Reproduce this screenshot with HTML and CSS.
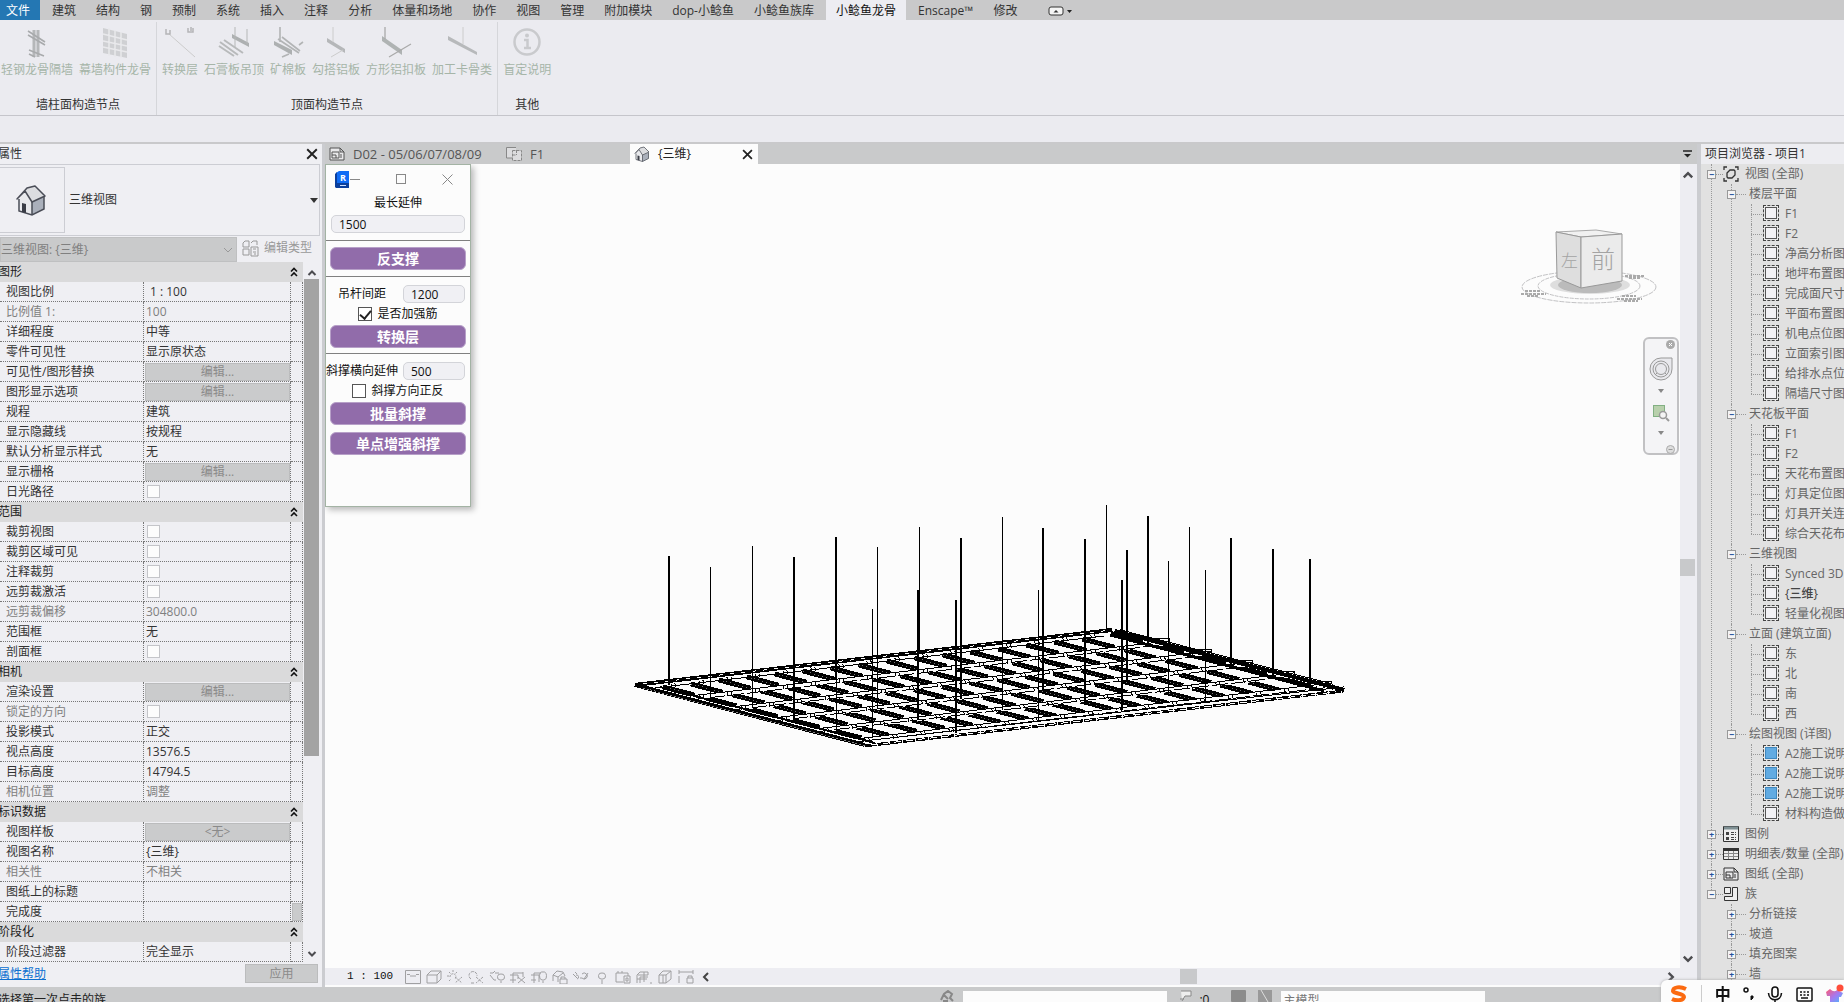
FILE: index.html
```html
<!DOCTYPE html>
<html lang="zh-CN">
<head>
<meta charset="utf-8">
<title>项目1 - {三维}</title>
<link rel="stylesheet" href="styles.css">
</head>
<body>
<svg width="0" height="0" class="defs" aria-hidden="true">
  <symbol id="collapse" viewBox="0 0 8 10"><path d="M1 4.5 4 1.5 7 4.5M1 9 4 6 7 9" fill="none" stroke="#111" stroke-width="1.6"/></symbol>
  <symbol id="chev" viewBox="0 0 10 10"><path d="M1 3 5 7 9 3" fill="none" stroke="currentColor" stroke-width="1"/></symbol>
  <symbol id="bold-chev" viewBox="0 0 10 10"><path d="M1.500 3 5 6.500 8.500 3" fill="none" stroke="#4c4c50" stroke-width="2"/></symbol>
  <symbol id="close" viewBox="0 0 10 10"><path d="M1 1 9 9M9 1 1 9" stroke="#222" stroke-width="1.600"/></symbol>
  <symbol id="house" viewBox="0 0 32 32"><path d="M4 16 7 28 17 31 29 25 29 13 17 2 12 4Z" fill="#e8e9ec"/><path d="M17 16 29 13V25L17 31Z" fill="#aab0bb"/><path d="M2 15 12 4 20 2 30 12 17 18 10 7Z" fill="#dcdde0" stroke="#4a4d57" stroke-width="1.500" stroke-linejoin="round"/><path d="M4 15V27L17 31 29 25V13M17 18V31" fill="none" stroke="#4a4d57" stroke-width="1.500"/><path d="M7 19 11 20V29L7 28Z" fill="#3b3e47"/></symbol>
  <symbol id="sheet" viewBox="0 0 16 14"><path d="M1 1H11L15 5V13H1Z M11 1V5H15" fill="#e8e8ea" stroke="currentColor"/><path d="M3 5H10V11H3ZM3 8H7V11M12 7V11" fill="none" stroke="currentColor"/></symbol>
</svg>

<header class="ribbon">
  <nav class="tabs">
    <button class="tab file">文件</button><button class="tab">建筑</button><button class="tab">结构</button><button class="tab">钢</button><button class="tab">预制</button><button class="tab">系统</button><button class="tab">插入</button><button class="tab">注释</button><button class="tab">分析</button><button class="tab">体量和场地</button><button class="tab">协作</button><button class="tab">视图</button><button class="tab">管理</button><button class="tab">附加模块</button><button class="tab">dop-小鲶鱼</button><button class="tab">小鲶鱼族库</button><button class="tab active">小鲶鱼龙骨</button><button class="tab">Enscape™</button><button class="tab">修改</button>
    <button class="tab toggle" aria-label="最小化功能区"><svg width="26" height="10" viewBox="0 0 26 10"><rect x="1" y="1" width="14" height="8" rx="2" fill="#f4f4f4" stroke="#333"/><path d="M5.500 6.500H10.500L8 4Z" fill="#333"/><path d="M19 4H24L21.500 7Z" fill="#222"/></svg></button>
  </nav>
  <div class="panels">
    <section class="panel wall">
      <div class="tools">
        <button class="tool"><svg viewBox="0 0 32 32"><path d="M13 3V30M17 3V30" stroke="#b5b7b9" stroke-width="3"/><path d="M7 4 24 15M7 8 24 18M8 23 23 29M8 27 14 30" stroke="#a8aaac" stroke-width="1.600"/></svg>轻钢龙骨隔墙</button>
        <button class="tool"><svg viewBox="0 0 32 32"><path d="M4 1 28 7V31L4 26Z" fill="#cfd0d3"/><path d="M10 1V29M16 3V30M22 5V31M4 7 28 13M4 14 28 19M4 20 28 25" stroke="#e9e9ec" stroke-width="1.500"/></svg>幕墙构件龙骨</button>
      </div>
      <h2>墙柱面构造节点</h2>
    </section>
    <section class="panel ceiling">
      <div class="tools">
        <button class="tool"><svg viewBox="0 0 32 32"><path d="M5 7 31 30" stroke="#ccc"/><path d="M2 2V7H6V3M24 1V5H29V1M27 0V4" fill="none" stroke="#b5b5b7" stroke-width="1.500"/></svg>转换层</button>
        <button class="tool"><svg viewBox="0 0 32 32"><path d="M14 7 31 16V20L14 11Z" fill="#adb0b1"/><path d="M17 0V20M29 2V17" stroke="#b5b7b7"/><path d="M2 15 20 28M6 13 25 26M1 19 16 29" stroke="#b8babb" stroke-width="2"/></svg>石膏板吊顶</button>
        <button class="tool"><svg viewBox="0 0 32 32"><path d="M2 14 20 23V28L2 18Z" fill="#adb0b1"/><path d="M8 0V15M10 10 28 24M6 12 27 26M17 27 10 30M27 18 31 15" stroke="#b2b4b5" stroke-width="1.600"/></svg>矿棉板</button>
        <button class="tool"><svg viewBox="0 0 32 32"><path d="M7 11 25 22V26L7 15Z" fill="#b5b7b9"/><path d="M13 0V15M23 23 11 30" stroke="#ccc"/></svg>勾搭铝板</button>
        <button class="tool"><svg viewBox="0 0 32 32"><path d="M2 9 22 23V28L2 14Z" fill="#afb3b3"/><path d="M5 0V12M31 17 9 30" stroke="#aaa" stroke-width="1.300"/></svg>方形铝扣板</button>
        <button class="tool"><svg viewBox="0 0 32 32"><path d="M2 9 31 25V28L2 13Z" fill="#b7b9bb"/><path d="M17 0V17" stroke="#ccc"/></svg>加工卡骨类</button>
      </div>
      <h2>顶面构造节点</h2>
    </section>
    <section class="panel other">
      <div class="tools">
        <button class="tool"><svg viewBox="0 0 32 32"><circle cx="16" cy="15" r="12.500" fill="none" stroke="#c9cacd" stroke-width="2.500"/><path d="M13 13H16.500V21M13 21H20" fill="none" stroke="#c9cacd" stroke-width="2.500"/><circle cx="16" cy="8.500" r="2" fill="#c9cacd"/></svg>盲定说明</button>
      </div>
      <h2>其他</h2>
    </section>
  </div>
  <div class="options"></div>
</header>

<div class="workspace">
  <aside class="props">
    <div class="pane-title"><span>属性</span><button class="icon-btn" aria-label="关闭属性"><svg width="12" height="12"><use href="#close"/></svg></button></div>
    <div class="type">
      <div class="thumb"><svg width="32" height="32"><use href="#house"/></svg></div>
      <span>三维视图</span>
      <button class="icon-btn" aria-label="类型选择"><svg width="8" height="5" viewBox="0 0 8 5"><path d="M0 0H8L4 5Z" fill="#333"/></svg></button>
    </div>
    <div class="filter">
      <div class="combo"><select disabled aria-label="实例过滤器"><option>三维视图: {三维}</option></select><svg width="10" height="10"><use href="#chev"/></svg></div>
      <button class="edit-type" disabled><svg width="17" height="17" viewBox="0 0 17 17" fill="none" stroke="#999"><path d="M1 3 3 1H7V7H1ZM9 3 11 1H15V5M1 9H7V15H1ZM9 7H16V16H9ZM11 9H14M11 12H14M12 14H14"/></svg>编辑类型</button>
    </div>
    <div class="grid-wrap">
      <table class="grid">
        <colgroup><col class="c1"><col class="c2"><col class="c3"></colgroup>
        <tbody>
        <tr class="cat"><th colspan="2">图形</th><td><svg width="8" height="10"><use href="#collapse"/></svg></td></tr>
        <tr><th>视图比例</th><td class="inset">1 : 100</td><td></td></tr>
        <tr class="dim"><th>比例值 1:</th><td>100</td><td></td></tr>
        <tr><th>详细程度</th><td>中等</td><td></td></tr>
        <tr><th>零件可见性</th><td>显示原状态</td><td></td></tr>
        <tr><th>可见性/图形替换</th><td><button disabled>编辑...</button></td><td></td></tr>
        <tr><th>图形显示选项</th><td><button disabled>编辑...</button></td><td></td></tr>
        <tr><th>规程</th><td>建筑</td><td></td></tr>
        <tr><th>显示隐藏线</th><td>按规程</td><td></td></tr>
        <tr><th>默认分析显示样式</th><td>无</td><td></td></tr>
        <tr><th>显示栅格</th><td><button disabled>编辑...</button></td><td></td></tr>
        <tr><th>日光路径</th><td><input type="checkbox" aria-label="日光路径"></td><td></td></tr>
        <tr class="cat"><th colspan="2">范围</th><td><svg width="8" height="10"><use href="#collapse"/></svg></td></tr>
        <tr><th>裁剪视图</th><td><input type="checkbox" aria-label="裁剪视图"></td><td></td></tr>
        <tr><th>裁剪区域可见</th><td><input type="checkbox" aria-label="裁剪区域可见"></td><td></td></tr>
        <tr><th>注释裁剪</th><td><input type="checkbox" aria-label="注释裁剪"></td><td></td></tr>
        <tr><th>远剪裁激活</th><td><input type="checkbox" aria-label="远剪裁激活"></td><td></td></tr>
        <tr class="dim"><th>远剪裁偏移</th><td>304800.0</td><td></td></tr>
        <tr><th>范围框</th><td>无</td><td></td></tr>
        <tr><th>剖面框</th><td><input type="checkbox" aria-label="剖面框"></td><td></td></tr>
        <tr class="cat"><th colspan="2">相机</th><td><svg width="8" height="10"><use href="#collapse"/></svg></td></tr>
        <tr><th>渲染设置</th><td><button disabled>编辑...</button></td><td></td></tr>
        <tr class="dim"><th>锁定的方向</th><td><input type="checkbox" aria-label="锁定的方向"></td><td></td></tr>
        <tr><th>投影模式</th><td>正交</td><td></td></tr>
        <tr><th>视点高度</th><td>13576.5</td><td></td></tr>
        <tr><th>目标高度</th><td>14794.5</td><td></td></tr>
        <tr class="dim"><th>相机位置</th><td>调整</td><td></td></tr>
        <tr class="cat"><th colspan="2">标识数据</th><td><svg width="8" height="10"><use href="#collapse"/></svg></td></tr>
        <tr><th>视图样板</th><td><button disabled>&lt;无&gt;</button></td><td></td></tr>
        <tr><th>视图名称</th><td>{三维}</td><td></td></tr>
        <tr class="dim"><th>相关性</th><td>不相关</td><td></td></tr>
        <tr><th>图纸上的标题</th><td></td><td></td></tr>
        <tr><th>完成度</th><td></td><td><button aria-label="关联参数"></button></td></tr>
        <tr class="cat"><th colspan="2">阶段化</th><td><svg width="8" height="10"><use href="#collapse"/></svg></td></tr>
        <tr><th>阶段过滤器</th><td>完全显示</td><td></td></tr>
        </tbody>
      </table>
      <div class="scroll"><svg class="up" width="10" height="10"><use href="#bold-chev"/></svg><span class="bar"></span><svg width="10" height="10"><use href="#bold-chev"/></svg></div>
    </div>
    <div class="foot"><a href="#help">属性帮助</a><button disabled>应用</button></div>
  </aside>

  <main class="stage">
    <div class="doc-tabs">
      <button class="doc first"><svg width="16" height="14"><use href="#sheet"/></svg>D02 - 05/06/07/08/09</button>
      <button class="doc second"><svg width="16" height="14" viewBox="0 0 16 14"><path d="M.5.5H10V3H15.500V13.500H6V11H.500Z" fill="#dcdcde"/><path d="M6 11H.5V.5H10" fill="none" stroke="#888"/><path d="M6.500 3.500H15.500V13.500H6.500ZM6.500 8H10M10.500 3V8" fill="none" stroke="#888" stroke-dasharray="3 1"/></svg>F1</button>
      <div class="doc active"><svg width="16" height="16"><use href="#house"/></svg>{三维}<button class="icon-btn" aria-label="关闭视图"><svg width="11" height="11"><use href="#close"/></svg></button></div>
      <button class="icon-btn more" aria-label="视图列表"><svg width="9" height="8" viewBox="0 0 9 8"><path d="M0 1H9" stroke="#222" stroke-width="1.500"/><path d="M1 4H8L4.500 7.500Z" fill="#222"/></svg></button>
    </div>
    <div class="view-row">
      <div class="canvas">
        <svg class="model" viewBox="0 0 1356 804" shape-rendering="crispEdges" fill="none" stroke="#000">
          <!-- cross ribs, broken where the carrying rails pass over them -->
          <path stroke-width="5" stroke-dasharray="33 10" d="M338 523l202 52M366 520l204 53M394 516l204 53M422 513l204 53M450 510l204 53M478 507l204 53M506 504l204 53M534 501l204 53M562 497l204 53M590 494l204 53M618 491l204 53M646 488l204 53M674 485l204 53M702 481l204 53M730 478l204 53M758 475l204 53M786 470l206 54"/>
          <path stroke="#777" stroke-width="1" stroke-dasharray="1 3" d="M338 523l196 51M366 520l196 51M394 516l196 51M422 513l196 51M450 510l196 51M478 507l196 51M506 504l196 51M534 501l196 51M562 497l196 51M590 494l196 51M618 491l196 51M646 488l196 51M674 485l196 51M702 481l196 51M730 478l196 51M758 475l196 51"/>
          <!-- carrying rails -->
          <g stroke="#fcfcfc" stroke-width="4"><path d="M366 534L845 479M408 545L887 489M449 556L928 500M491 567L970 511M532 577L1008 522"/></g>
          <g stroke-width="1"><path d="M366 532L845 477M408 543L887 487M449 554L928 498M491 565L970 509M532 575L1008 519"/><path d="M366 536L845 480M408 546L887 491M449 557L928 502M491 568L970 512M532 578L1008 523" stroke-dasharray="16 3"/></g>
          <g stroke-width="4" stroke-dasharray="1 3 1 23.200"><path d="M374 533L845 479M416 544L887 489M457 555L928 500M499 566L970 511M540 576L1008 522M346 522L788 470"/></g>
          <!-- perimeter channel -->
          <path stroke-width="4" d="M310 521L788 466"/>
          <path stroke="#fcfcfc" stroke-width="1" stroke-dasharray="4 7" d="M318 520L788 466"/>
          <path stroke-width="1" d="M322 525L780 472"/>
          <path stroke-width="4" d="M310 521L540 581"/>
          <path stroke="#888" stroke-width="1" stroke-dasharray="2 2" d="M318 524L540 582"/>
          <path stroke-width="2" d="M335 523L550 579"/>
          <path stroke-width="4" d="M790 467L1020 526"/>
          <path stroke-width="3" d="M786 471L1000 527"/>
          <path stroke-width="1" d="M796 466L1008 520V526M830 474.500H845V483M872 485.500H887V494M914 496.500H928V505M956 507.500H970V516M994 517.500H1008"/>
          <path stroke-width="1" d="M540 577L1020 523"/>
          <path stroke-width="3" stroke-dasharray="12 1" d="M540 582L1020 527"/>
          <path stroke="#fcfcfc" stroke-width="1" stroke-dasharray="7 5" d="M546 581L1012 528"/>
          <!-- hangers -->
          <path stroke-width="2" d="M344 392V521M469 393V556M511 373V516M593 426V556M631 436V569M636 374V535M678 353V546M719 364V526M761 375V539M798 416V546M803 386V516M824 352V481M907 374V503M949 385V515M986 395V525"/>
          <path stroke-width="1" d="M385.500 403V534M427.500 382V544M511.500 516V568M552.500 383V544M547.500 445V574M594.500 363V489M714.500 426V556M782.500 341V469M844.500 397V528M865.500 363V493M881.500 406V539"/>
        </svg>
        <svg class="cube" width="138" height="76" viewBox="0 0 138 76" aria-label="ViewCube">
          <g fill="none" stroke="#c2c2c4" stroke-width="1"><ellipse cx="69" cy="58" rx="67" ry="16" stroke-dasharray="5 1"/><ellipse cx="69" cy="57" rx="51" ry="13" stroke-dasharray="4 1"/></g>
          <path d="M1 65H26M5 62H20M7 67H18M97 70H122M102 67H116M104 72H118M105 47H124M109 49H120" stroke="#aaa" stroke-width="2" stroke-dasharray="3 1"/>
          <ellipse cx="70" cy="56" rx="40" ry="9" fill="#dedede"/><ellipse cx="70" cy="56" rx="32" ry="8" fill="#bbb"/>
          <path d="M36 3 76 1 102 5 61 8Z" fill="#f1f1f1" stroke="#aaa"/>
          <path d="M36 3 61 8V59L37 49Z" fill="#dedede" stroke="#999"/>
          <path d="M61 8 102 5V52L61 59Z" fill="#ebebeb" stroke="#999"/>
          <text x="41" y="38" class="cube-left">左</text><text x="71" y="39" class="cube-front">前</text>
        </svg>
        <div class="navbar">
          <svg width="9" height="9" viewBox="0 0 9 9" class="nav-end"><circle cx="4.500" cy="4.500" r="4.500" fill="#aaa"/><path d="M3 3 6 6M6 3 3 6" stroke="#fff"/></svg>
          <button class="icon-btn" aria-label="导航控制盘"><svg width="24" height="24" viewBox="0 0 24 24" fill="#e9e9ed" stroke="#999"><path d="M12 1H23V12A11 11 0 1 1 12 1Z"/><circle cx="12" cy="12" r="8"/><circle cx="12" cy="12" r="5.500"/><path d="M6 18 8 16M18 18 16 16"/></svg></button>
          <svg width="6" height="4" viewBox="0 0 6 4"><path d="M0 0H6L3 4Z" fill="#888"/></svg>
          <hr>
          <button class="icon-btn" aria-label="缩放"><svg width="18" height="18" viewBox="0 0 18 18"><rect x="1.500" y="1.500" width="11" height="11" fill="#b8d0ac" stroke="#82b083"/><circle cx="11" cy="11" r="3.500" fill="#f4f4f4" stroke="#999" stroke-width="1.500"/><path d="M14 14 17 17" stroke="#999" stroke-width="2"/></svg></button>
          <svg width="6" height="4" viewBox="0 0 6 4"><path d="M0 0H6L3 4Z" fill="#888"/></svg>
          <svg width="9" height="9" viewBox="0 0 9 9" class="nav-end low"><circle cx="4.500" cy="4.500" r="4" fill="#ddd" stroke="#aaa"/><path d="M2.500 4.500H6.500" stroke="#999"/></svg>
        </div>
        <form class="dialog">
          <div class="bar">
            <svg width="15" height="17" viewBox="0 0 15 17"><path d="M1 2 4 0H14V12H1Z" fill="#0f6cf5"/><path d="M0 3 2 1V12H14V17H1L0 16Z" fill="#0b3f9c"/><path d="M2 2H14V12H2Z" fill="#0f6cf5"/><text x="5" y="10" class="logo-r">R</text><path d="M5 14.500H11" stroke="#cfe0ff"/></svg>
            <button type="button" class="icon-btn" aria-label="最小化"><svg width="11" height="11"><path d="M0 5.500H10" stroke="#888"/></svg></button>
            <button type="button" class="icon-btn max" aria-label="最大化"><svg width="11" height="11"><rect x=".5" y=".5" width="9" height="9" fill="none" stroke="#888"/></svg></button>
            <button type="button" class="icon-btn x" aria-label="关闭"><svg width="11" height="11"><path d="M.5.5 10.500 10.500M10.500.5.5 10.500" stroke="#888"/></svg></button>
          </div>
          <label class="top" for="ext">最长延伸</label>
          <input class="field wide" id="ext" type="text" value="1500">
          <hr><button type="button" class="go">反支撑</button><hr>
          <div class="pair"><label for="gap">吊杆间距</label><input class="field" id="gap" type="text" value="1200"></div>
          <label class="check"><input type="checkbox" checked>是否加强筋</label>
          <button type="button" class="go tight">转换层</button><hr>
          <div class="pair"><label for="dx">斜撑横向延伸</label><input class="field" id="dx" type="text" value="500"></div>
          <label class="check"><input type="checkbox">斜撑方向正反</label>
          <button type="button" class="go tight">批量斜撑</button>
          <button type="button" class="go">单点增强斜撑</button>
        </form>
      </div>
      <div class="vscroll"><svg class="up" width="12" height="12"><use href="#bold-chev"/></svg><span></span><svg width="12" height="12"><use href="#bold-chev"/></svg></div>
    </div>
    <div class="view-bar">
      <span class="scale">1 : 100</span>
      <div class="vicons">
        <svg viewBox="0 0 16 14"><path d="M.5.5H15.500V13.500H.5ZM2 4.500H5M5 6H11M11 4.500H14"/></svg>
        <svg viewBox="0 0 16 14"><path d="M1 5H11V13H1ZM1 5 5 1H15L11 5M15 1V9L11 13"/></svg>
        <svg viewBox="0 0 16 14"><path stroke-dasharray="2 1" d="M6 0V3M0 6H3M2 2 4 4M10 2 8 4M3 7A3 3 0 1 1 8 9M8 7 15 13M15 7 8 13M2 11 4 9"/></svg>
        <svg viewBox="0 0 16 14"><path stroke-dasharray="3 1" d="M3 9A4 4 0 1 1 9 6M3 13H7M8 7 15 13M15 7 8 13"/></svg>
        <svg viewBox="0 0 16 14"><path d="M1 3H4L6 1M1 5 5 10H7M6 3H10M12 13V11M12 4A3 3 0 0 0 11 10H13A3 3 0 0 0 12 4"/></svg>
        <svg viewBox="0 0 16 14"><path d="M3 13V3H13M0 5H8V9M0 10H6M8 7 15 13M15 7 8 13M13 2V7"/></svg>
        <svg viewBox="0 0 16 14"><path d="M3 13V3H10M0 5H8V12M0 10H5M12 13V11M12 2A3 4 0 0 0 11 10H13A3 4 0 0 0 12 2"/></svg>
        <svg viewBox="0 0 16 14"><path d="M1 11V5L5 1 11 2 13 6M1 5 6 7V12M6 7 11 3M8 9H15V14H8ZM9 9V7H13V9"/></svg>
        <svg viewBox="0 0 16 14"><path d="M0 4 4 8M3 5A2 2 0 1 1 4 9M7 8H9A3 3 0 1 0 9 4M11 9 15 3M2 2 4 4"/></svg>
        <svg viewBox="0 0 16 14"><path d="M8 3A3 3 0 0 0 7 9H9A3 3 0 0 0 8 3M7 11H9M7 13H9"/></svg>
        <svg viewBox="0 0 16 14"><path d="M1 3H13V6M1 3V12H8M3 1V3M7 1V3M9 6H15V13H9ZM11 8H13V11H11Z"/></svg>
        <svg viewBox="0 0 16 14"><path d="M1 13V5L4 2H12V5H2M4 13V7H12M8 2V12M1 9H11M14 13H16"/></svg>
        <svg viewBox="0 0 16 14"><path d="M2 5H9V13H2ZM2 5 6 1H14L9 5M14 1V9L9 13M6 5V13"/></svg>
        <svg viewBox="0 0 16 14"><path d="M1 0V4M15 0V4M1 2H15M1 6V13M9 8H15V13H9ZM10 8V6H14V8"/></svg>
        <svg viewBox="0 0 16 14" class="fold"><path d="M9 3 5 7 9 11"/></svg>
      </div>
      <span class="hthumb"></span>
      <svg class="right" width="12" height="12"><use href="#bold-chev"/></svg>
    </div>
  </main>

  <aside class="browser">
    <div class="pane-title">项目浏览器 - 项目1</div>
    <ul class="tree">
      <li><div class="row"><i class="box">−</i><i class="stub"></i><svg width="16" height="16" viewBox="0 0 16 16" fill="none" stroke="#333" stroke-width="1.300"><path d="M1 4V1H4M12 1H15V4M1 12V15H4M12 15H15V12M4 7 7 4H11L12 5V9L9 12H5L4 11Z"/></svg>视图 (全部)</div>
        <ul>
          <li><div class="row"><i class="box">−</i><i class="stub"></i>楼层平面</div>
            <ul class="leaves"><li><i></i>F1</li><li><i></i>F2</li><li><i></i>净高分析图</li><li><i></i>地坪布置图</li><li><i></i>完成面尺寸</li><li><i></i>平面布置图</li><li><i></i>机电点位图</li><li><i></i>立面索引图</li><li><i></i>给排水点位</li><li><i></i>隔墙尺寸图</li></ul></li>
          <li><div class="row"><i class="box">−</i><i class="stub"></i>天花板平面</div>
            <ul class="leaves"><li><i></i>F1</li><li><i></i>F2</li><li><i></i>天花布置图</li><li><i></i>灯具定位图</li><li><i></i>灯具开关连</li><li><i></i>综合天花布</li></ul></li>
          <li><div class="row"><i class="box">−</i><i class="stub"></i>三维视图</div>
            <ul class="leaves"><li><i></i>Synced 3D</li><li class="current"><i></i>{三维}</li><li><i></i>轻量化视图</li></ul></li>
          <li><div class="row"><i class="box">−</i><i class="stub"></i>立面 (建筑立面)</div>
            <ul class="leaves"><li><i></i>东</li><li><i></i>北</li><li><i></i>南</li><li><i></i>西</li></ul></li>
          <li><div class="row"><i class="box">−</i><i class="stub"></i>绘图视图 (详图)</div>
            <ul class="leaves"><li class="used"><i></i>A2施工说明</li><li class="used"><i></i>A2施工说明</li><li class="used"><i></i>A2施工说明</li><li><i></i>材料构造做</li></ul></li>
        </ul></li>
      <li><div class="row"><i class="box">+</i><i class="stub"></i><svg width="16" height="16" viewBox="0 0 16 16"><path d="M.5.5H15.500V15.500H.5Z" fill="#eee" stroke="#333"/><path d="M1 2H15" stroke="#7f9094" stroke-width="3"/><path d="M3 6H6V9H3ZM3 11H6V14H3Z" fill="#444"/><path d="M8 6.500H13M8 8.500H13M8 11.500H13M8 13.500H13" stroke="#444" stroke-dasharray="3 1"/></svg>图例</div></li>
      <li><div class="row"><i class="box">+</i><i class="stub"></i><svg width="16" height="12" viewBox="0 0 16 12"><path d="M.5.5H15.500V11.500H.5Z" fill="#eee" stroke="#333"/><path d="M0 1.500H16" stroke="#333" stroke-width="3"/><path d="M1 5.500H15M1 8.500H15M5.500 3V11M10.500 3V11" stroke="#888"/></svg>明细表/数量 (全部)</div></li>
      <li><div class="row"><i class="box">+</i><i class="stub"></i><svg width="16" height="14" class="dark"><use href="#sheet"/></svg>图纸 (全部)</div></li>
      <li><div class="row"><i class="box">−</i><i class="stub"></i><svg width="16" height="16" viewBox="0 0 16 16" fill="#eee" stroke="#333"><path d="M1.500 1.500H7.500V7.500H1.500ZM9.500 1.500H14.500V14.500H1.500V10.500H9.500Z"/></svg>族</div>
        <ul class="open"><li><div class="row"><i class="box">+</i><i class="stub"></i>分析链接</div></li><li><div class="row"><i class="box">+</i><i class="stub"></i>坡道</div></li><li><div class="row"><i class="box">+</i><i class="stub"></i>填充图案</div></li><li><div class="row"><i class="box">+</i><i class="stub"></i>墙</div></li></ul></li>
    </ul>
  </aside>
</div>

<footer class="status">
  <span class="hint">选择第一次点击的族</span>
  <svg width="14" height="12" viewBox="0 0 14 12"><path d="M1 10 4 4 8 1 12 4 10 8 13 11M4 5 8 9M3 11H8" fill="none" stroke="#888" stroke-width="2"/></svg>
  <div class="combo ws"><select aria-label="工作集"><option></option></select><svg width="10" height="10"><use href="#chev"/></svg></div>
  <svg width="14" height="12" viewBox="0 0 14 12"><path d="M2 1H12V6H6L3 11M1 9H5" fill="#eee" stroke="#888"/></svg>
  <span class="count">:0</span>
  <svg width="15" height="12"><rect width="15" height="12" rx="1" fill="#8c8c8c"/></svg>
  <svg width="14" height="12" class="blk"><rect width="14" height="12" fill="#999"/><path d="M3 0 10 12" stroke="#ddd"/></svg>
  <div class="combo ws"><select aria-label="设计选项"><option>主模型</option></select><svg width="10" height="10"><use href="#chev"/></svg></div>
</footer>

<div class="ime">
  <svg width="20" height="18" viewBox="0 0 20 18"><path d="M17 4C11 1 4 2 4 6C5 9 15 8 15 12C14 16 7 16 3 14" fill="none" stroke="#fb6a10" stroke-width="4"/></svg>
  <span class="sep"></span>
  <b>中</b>
  <svg width="12" height="16" viewBox="0 0 12 16"><circle cx="3" cy="4" r="2" fill="none" stroke="#111" stroke-width="1.500"/><path d="M8 10H10V12L8 14Z" fill="#111" stroke="#111"/></svg>
  <svg width="16" height="17" viewBox="0 0 16 17" fill="none" stroke="#111" stroke-width="1.600"><rect x="5" y="1" width="6" height="10" rx="3"/><path d="M1.500 7C2 16 14 16 14.500 7M8 14V17"/></svg>
  <svg width="17" height="15" viewBox="0 0 17 15" fill="none" stroke="#111" stroke-width="1.500"><rect x="1" y="1" width="15" height="13" rx="1"/><path d="M4 5H14M4 8H14" stroke-dasharray="2 1.500"/><path d="M5 11H12"/></svg>
  <svg width="19" height="20" viewBox="0 0 19 20"><defs><linearGradient id="shirt" x2="1" y2="1"><stop stop-color="#ff5b6e"/><stop offset=".5" stop-color="#a678f0"/><stop offset="1" stop-color="#3fc0ff"/></linearGradient></defs><path d="M1 8 5 5Q9 9 12 6L18 9 16 13H14V19H5V12H2Z" fill="url(#shirt)"/><circle cx="15" cy="4" r="3.500" fill="#ff4d3a"/></svg>
</div>
</body>
</html>
```
FILE: styles.css
```css
* { box-sizing: border-box; }
html, body { height: 100%; }
body {
  margin: 0;
  display: flex;
  flex-direction: column;
  overflow: hidden;
  font: 12px/20px "Open Sans", "Noto Sans CJK SC", sans-serif;
  color: #333;
  background: #c9cacb;
}
.defs { position: absolute; }
button, input, select { font: inherit; color: inherit; margin: 0; }
button { padding: 0; border: 0; background: none; white-space: nowrap; }
svg { display: block; flex: none; }
ul { list-style: none; margin: 0; padding: 0; }
h2 { margin: 0; font-size: 12px; font-weight: 400; }
hr { border: 0; margin: 0; height: 1px; background: #808080; }
.icon-btn { display: flex; align-items: center; justify-content: center; }

/* ribbon */
.ribbon { flex: none; background: #ebebf0; }
.tabs { display: flex; height: 20px; background: #c9c9ca; }
.tab { height: 20px; padding: 2px 10px 0; line-height: 18px; }
.tab.file { padding-left: 6px; margin-right: 2px; background: #2477b3; color: #fff; }
.tab.active { margin: 0 2px; background: #ededf2; color: #111; }
.tab.toggle { display: flex; align-items: center; padding-left: 21px; }
.panels { display: flex; height: 95px; padding-top: 2px; }
.panel { display: flex; flex-direction: column; text-align: center; border-right: 1px solid #d5d6da; }
.panel:last-child { border: 0; }
.tools { display: flex; gap: 6px; padding: 5px 5px 0; height: 75px; }
.wall .tools { padding-left: 1px; }
.tool { display: flex; flex-direction: column; align-items: center; line-height: 20px; color: #a6b5a8; }
.tool svg { width: 32px; height: 32px; margin-bottom: 1px; }
.options { height: 27px; border-top: 1px solid #c5c5cb; }

/* workspace */
.workspace { flex: 1; min-height: 0; display: flex; border-top: 2px solid #c9c9cb; }
.pane-title { flex: none; display: flex; justify-content: space-between; height: 20px; line-height: 20px; }

/* properties */
.props { flex: none; width: 325px; display: flex; flex-direction: column; background: #efeff3; border-right: 3px solid #cbccd0; overflow: hidden; }
.props .pane-title { padding-right: 4px; text-indent: -2px; }
.type { flex: none; display: flex; align-items: center; height: 72px; margin-right: 2px; border: 1px solid #cccdd3; border-left: 0; padding-right: 1px; }
.thumb { width: 65px; height: 66px; display: flex; align-items: center; justify-content: center; border: 1px solid #cccdd3; border-left: 0; padding-right: 3px; margin-right: 4px; }
.type .icon-btn { margin-left: auto; }
.filter { flex: none; display: flex; height: 26px; gap: 5px; padding-top: 1px; }
.combo { position: relative; }
.combo svg { position: absolute; right: 4px; top: 8px; color: #999; }
.combo select { width: 100%; height: 100%; appearance: none; border: 0; padding: 0; opacity: 1; border-radius: 0; }
.filter .combo { width: 237px; height: 25px; }
.filter select { background: #c9cacb; border: 1px solid #bfc0c1; color: #808080; }
.edit-type { display: flex; align-items: center; gap: 5px; height: 22px; color: #999; }
.grid-wrap { flex: 1; min-height: 0; display: flex; gap: 1px; overflow: hidden; }
.grid { flex: none; width: 303px; border-spacing: 0; table-layout: fixed; align-self: flex-start; }
.c1 { width: 144px; }
.c2 { width: 147px; }
.grid tr { height: 20px; }
.grid th, .grid td { height: 20px; padding: 0; border: 0 dotted #777; border-width: 0 1px 1px 0; font-weight: 400; text-align: left; line-height: 19px; white-space: nowrap; }
.grid th { padding-left: 6px; }
.grid td { padding-left: 2px; }
.grid td.inset { padding-left: 6px; }
.grid .dim { color: #808080; }
.grid .cat th, .grid .cat td { background: #dadadb; border-color: transparent; padding-left: 0; color: #222; }
.grid .cat th { text-indent: -2px; }
.grid button { display: block; width: 145px; height: 18px; margin-left: -1px; line-height: 16px; border: 1px solid #bbbcbd; background: #cacbcc; color: #8a8a8a; }
.grid td:last-child { padding-left: 1px; }
.grid td:last-child button { width: 10px; margin: 0; }
.grid .cat td { padding-left: 0; }
.grid .cat td svg { margin-left: -1px; }
.grid input { display: block; appearance: none; width: 13px; height: 13px; margin-left: 1px; border: 1px solid #c4c5c9; background: #fcfcfc; }
.scroll { width: 15px; display: flex; flex-direction: column; align-items: center; padding: 6px 0 3px; }
.scroll .bar { width: 15px; height: 477px; margin: 1px 0 auto; background: #a3a3a3; }
.up { transform: rotate(180deg); }
.foot { flex: none; height: 25px; display: flex; justify-content: space-between; padding: 2px 4px 0 0; text-indent: -2px; }
.foot a { color: #0b6fd0; line-height: 20px; }
.foot button { width: 73px; height: 19px; line-height: 17px; border: 1px solid #bbbcbd; background: #cacbcc; color: #8a8a8a; }

/* drawing area */
.stage { flex: 1; min-width: 0; display: flex; flex-direction: column; border-bottom: 2px solid #fcfcfc; background: #ededf2; }
.doc-tabs { flex: none; display: flex; height: 20px; background: #c9cacb; }
.doc { display: flex; align-items: center; gap: 8px; padding-left: 4px; color: #444; line-height: 18px; }
.doc.first, .doc.second { font-size: 13px; color: #555; }
.doc.first { width: 177px; }
.doc.second { width: 128px; }
.doc.active { width: 128px; background: #fcfcfc; color: #222; }
.doc .icon-btn { margin: 0 5px 0 auto; }
.more { margin: 0 5px 0 auto; }
.view-row { flex: 1; min-height: 0; display: flex; }
.canvas { position: relative; flex: 1; min-width: 0; overflow: hidden; background: #fcfcfc; }
.model { width: 100%; height: 100%; }
.cube { position: absolute; right: 22px; top: 65px; }
.cube text { font-family: "Liberation Serif", "Noto Sans CJK SC", serif; font-weight: 300; fill: #a3a3a3; stroke: none; }
.cube-left { font-size: 17px; }
.cube-front { font-size: 24px; }
.navbar { position: absolute; right: 1px; top: 173px; width: 36px; height: 118px; display: flex; flex-direction: column; align-items: center; border: 2px solid #c1c1c3; border-radius: 6px; background: #f4f4f6; padding-top: 1px; }
.nav-end { align-self: flex-end; margin-right: 2px; }
.navbar .icon-btn { margin: 8px 0; }
.navbar hr { width: 26px; margin-top: 4px; background: #bbb; }
.navbar hr + .icon-btn { margin-bottom: 9px; margin-top: 7px; }
.navbar .low { margin-top: 10px; }
.vscroll { width: 17px; display: flex; flex-direction: column; align-items: center; justify-content: space-between; padding: 5px 2px 3px 0; }
.vscroll span { width: 15px; height: 17px; background: #c8c9cb; }
.view-bar { flex: none; position: relative; display: flex; align-items: center; height: 17px; padding-left: 22px; }
.scale { width: 58px; font: 11px/17px "Liberation Mono", monospace; color: #111; }
.vicons { display: flex; gap: 5px; }
.vicons svg { width: 16px; height: 14px; fill: none; stroke: #a0a0a2; }
.vicons .fold { stroke: #444; stroke-width: 2; }
.hthumb { position: absolute; left: 62%; margin-left: 4px; width: 17px; height: 15px; background: #c8c9cb; }
.right { margin: 0 20px 0 auto; transform: rotate(-90deg); }

/* floating tool window */
.dialog { position: absolute; left: 0; top: 0; width: 146px; height: 343px; display: flex; flex-direction: column; border: 1px solid #a3b3a4; background: #fcfcfc; color: #111; box-shadow: 3px 3px 6px #bbb; }
.dialog .bar { display: flex; align-items: center; height: 28px; padding: 0 17px 0 9px; }
.dialog .max { margin: 0 auto 0 35px; }
.dialog .top { text-align: center; }
.logo-r { font: 700 9px "Open Sans", sans-serif; fill: #fff; }
.field { height: 18px; padding: 0 7px; border: 1px solid #d3d4d9; border-radius: 5px; background: #f0f0f4; min-width: 0; line-height: 16px; outline: 0; }
.field.wide { width: 134px; margin: 2px 0 7px 5px; }
.go { flex: none; width: 136px; height: 23px; margin: 6px 4px 0; border: 1px solid #b7a0c8; border-radius: 6px; background: #916caa; color: #fff; font-size: 14px; font-weight: 700; line-height: 21px; }
.go + hr { margin-top: 6px; }
.go + .go { margin-top: 7px; }
.go.tight { margin-top: 1px; }
.go.tight + hr { margin-top: 5px; }
.dialog .pair { display: flex; margin: 8px 5px 0 0; height: 18px; align-items: center; gap: 5px; }
.pair label { width: 72px; text-align: center; white-space: nowrap; }
.pair .field { flex: 1; }
.check { display: flex; justify-content: center; align-items: center; gap: 5px; height: 20px; margin-top: 1px; }
.check input { appearance: none; width: 14px; height: 14px; border: 1px solid #555; background: #fff; display: flex; justify-content: center; }
.check input:checked::after { content: ""; width: 5px; height: 9px; border: solid #222; border-width: 0 2px 2px 0; transform: rotate(40deg); }

/* project browser */
.browser { flex: none; width: 147px; border-left: 4px solid #cbccd0; background: #e1e1e1; overflow: hidden; white-space: nowrap; color: #666; }
.browser .pane-title { background: #ededf1; color: #333; padding-left: 4px; }
.tree { padding-left: 6px; }
.tree ul { margin-left: 20px; }
.tree li { position: relative; }
.tree li::before { content: ""; position: absolute; left: 4px; top: 0; bottom: 0; border-left: 1px dotted #999; }
.tree li:last-child::before { bottom: auto; height: 10px; }
.tree .open > li:last-child::before { height: 20px; }
.row { position: relative; display: flex; align-items: center; height: 20px; }
.row svg { margin-right: 6px; color: #333; }
.box { width: 9px; height: 9px; border: 1px solid #999; background: #f4f4f4; color: #23509c; font: 700 9px/7px "Open Sans", sans-serif; text-align: center; }
.stub { width: 7px; border-top: 1px dotted #999; }
.tree ul .stub { width: 10px; margin-right: 3px; }
.leaves li { display: flex; align-items: center; height: 20px; padding-left: 16px; gap: 6px; }
.leaves li::after { content: ""; position: absolute; left: 4px; top: 10px; width: 11px; border-top: 1px dotted #999; }
.leaves i { flex: none; width: 16px; height: 16px; margin-bottom: 2px; border: 1px dashed #444; padding: 1px; display: flex; background: #e9e9e9; }
.leaves i::before { content: ""; flex: 1; border: 1px solid #555; background: #f3f2f5; }
.leaves .used i::before { background: #62abe2; border-color: #3f87bd; }
.leaves .current { font-weight: 500; color: #444; }

/* status bar */
.status { flex: none; display: flex; height: 15px; overflow: hidden; padding-top: 3px; background: #c9cacb; }
.hint { width: 51%; text-indent: -2px; line-height: 18px; padding-top: 1px; color: #222; }
.ws { width: 204px; height: 20px; margin: 1px 12px 0 9px; background: #fcfcfc; }
.ws select { background: #fcfcfc; padding-left: 2px; color: #777; line-height: 18px; }
.count { width: 38px; padding-left: 6px; line-height: 18px; padding-top: 1px; color: #111; }
.blk { margin-left: 12px; }

/* input method bar */
.ime { position: fixed; right: 0; bottom: 0; width: 183px; height: 22px; display: flex; align-items: center; justify-content: space-between; padding: 6px 0 0 8px; border-radius: 6px 0 0; background: #fcfcfc; box-shadow: 0 0 3px #aaa; color: #111; overflow: hidden; }
.ime .sep { width: 1px; height: 18px; background: #ccc; }
.ime b { font-size: 16px; line-height: 18px; font-weight: 700; }
```
